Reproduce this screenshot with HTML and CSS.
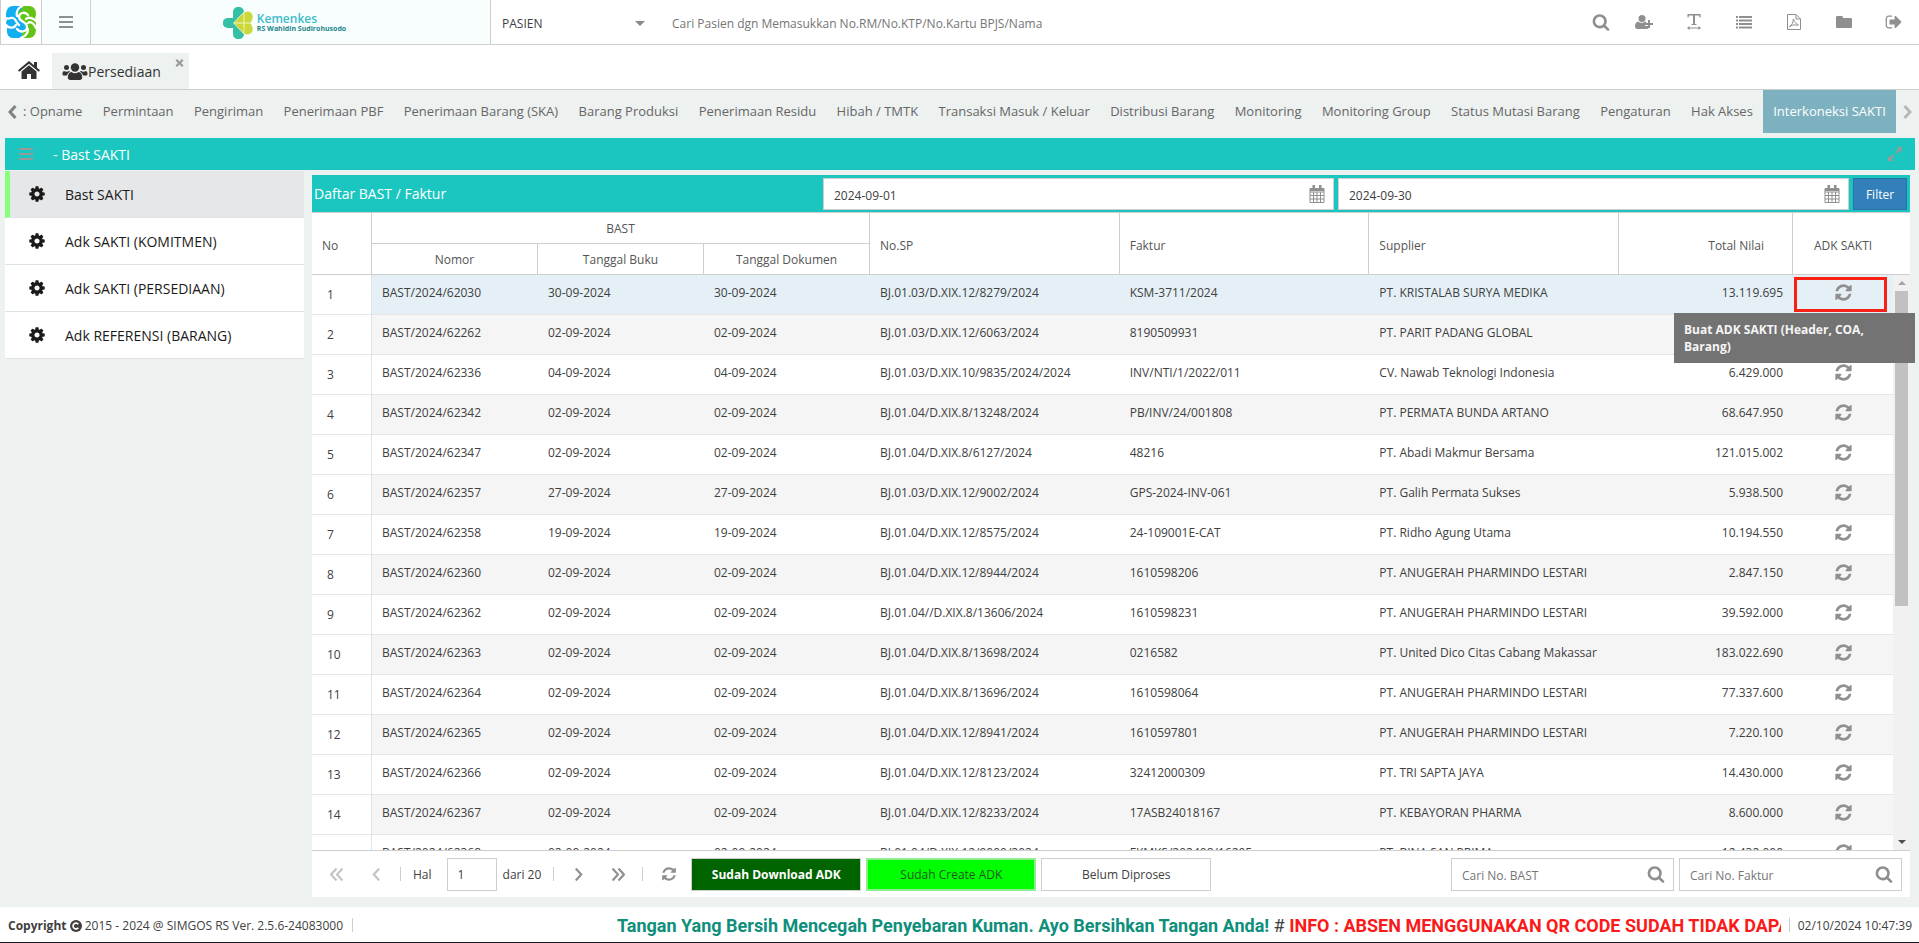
FILE: index.html
```html
<!DOCTYPE html>
<html lang="id">
<head>
  <meta charset="UTF-8">
  <title>SIMGOS - Persediaan</title>
  <link rel="stylesheet" href="styles.css">
</head>
<body>

  <!-- Icons -->
  <svg class="sprite" aria-hidden="true">
    <symbol id="i-search" viewBox="0 0 1792 1792"><path d="M1216 832q0-185-131.500-316.500t-316.500-131.500-316.500 131.500-131.500 316.500 131.500 316.500 316.500 131.500 316.500-131.500 131.500-316.500zm512 832q0 52-38 90t-90 38q-54 0-90-38l-343-342q-179 124-399 124-143 0-273.500-55.500t-225-150-150-225-55.500-273.500 55.500-273.500 150-225 225-150 273.500-55.500 273.500 55.500 225 150 150 225 55.500 273.500q0 220-124 399l343 343q37 37 37 90z"/></symbol>
    <symbol id="i-refresh" viewBox="0 0 1792 1792"><path d="M1639 1056q0 5-1 7-64 268-268 434.500t-478 166.500q-146 0-282.500-55t-243.500-157l-129 129q-19 19-45 19t-45-19-19-45v-448q0-26 19-45t45-19h448q26 0 45 19t19 45-19 45l-137 137q71 66 161 102t187 36q134 0 250-65t186-179q11-17 53-117 8-23 30-23h192q13 0 22.500 9.500t9.500 22.500zm25-800v448q0 26-19 45t-45 19h-448q-26 0-45-19t-19-45 19-45l138-138q-148-137-349-137-134 0-250 65t-186 179q-11 17-53 117-8 23-30 23h-199q-13 0-22.500-9.500t-9.500-22.500v-7q65-268 270-434.500t480-166.500q146 0 284 55.500t245 156.500l130-129q19-19 45-19t45 19 19 45z"/></symbol>
    <symbol id="i-cog" viewBox="0 0 1792 1792"><path d="M1152 896q0-106-75-181t-181-75-181 75-75 181 75 181 181 75 181-75 75-181zm512-109v222q0 12-8 23t-20 13l-185 28q-19 54-39 91 35 50 107 138 10 12 10 25t-9 23q-27 37-99 108t-94 71q-12 0-26-9l-138-108q-44 23-91 38-16 136-29 186-7 28-36 28h-222q-14 0-24.500-8.500t-11.500-21.500l-28-184q-49-16-90-37l-141 107q-10 9-25 9-14 0-25-11-126-114-165-168-7-10-7-23 0-12 8-23 15-21 51-66.500t54-70.500q-27-50-41-99l-183-27q-13-2-21-12.500t-8-23.500v-222q0-12 8-23t19-13l186-28q14-46 39-92-40-57-107-138-10-12-10-24 0-10 9-23 26-36 98.500-107.500t94.500-71.500q13 0 26 10l138 107q44-23 91-38 16-136 29-186 7-28 36-28h222q14 0 24.500 8.500t11.500 21.500l28 184q49 16 90 37l142-107q9-9 24-9 13 0 25 10 129 119 165 170 7 8 7 22 0 12-8 23-15 21-51 66.500t-54 70.500q26 50 41 98l183 28q13 2 21 12.500t8 23.500z"/></symbol>
    <symbol id="i-signout" viewBox="0 0 1792 1792"><path d="M704 1440q0 4 1 20t.5 26.500-3 23.500-10 19.500-20.500 6.500h-320q-119 0-203.500-84.500t-84.500-203.500v-704q0-119 84.500-203.500t203.500-84.500h320q13 0 22.500 9.500t9.500 22.500q0 4 1 20t.5 26.500-3 23.500-10 19.500-20.500 6.500h-320q-66 0-113 47t-47 113v704q0 66 47 113t113 47h312l11.500 1 11.500 3 8 5.500 7 9 2 13.500zm928-544q0 26-19 45l-544 544q-19 19-45 19t-45-19-19-45v-288h-448q-26 0-45-19t-19-45v-384q0-26 19-45t45-19h448v-288q0-26 19-45t45-19 45 19l544 544q19 19 19 45z"/></symbol>
    <symbol id="i-bars" viewBox="0 0 14 14"><path d="M0 1h14v2H0zM0 6h14v2H0zM0 11h14v2H0z"/></symbol>
    <symbol id="i-userplus" viewBox="0 0 18 14"><circle cx="7" cy="3.500" r="3.500"/><path d="M3 6.500C1 7 0 9 0 11.500 0 13 1 14 2.500 14h9c1 0 1.500-.3 2-.8V11H10V8h1.500c-.2-.8-.6-1.300-1.200-1.500C8.500 8.300 5 8.300 3 6.500z"/><path d="M13 5h2v3h3v2h-3v3h-2v-3h-3V8h3z"/></symbol>
    <symbol id="i-text" viewBox="0 0 14 16"><path d="M.5 0h13v3.500h-1L12 1.500H8V10h1.500v1h-5v-1H6V1.500H2l-.5 2h-1zM0 14l2.500-2v1.500h9V12l2.500 2-2.500 2v-1.500h-9V16z"/></symbol>
    <symbol id="i-list" viewBox="0 0 16 14"><path d="M0 1h2v2H0zM0 4.500h2v2H0zM0 8h2v2H0zM0 11.500h2v2H0zM3 1h13v2H3zM3 4.500h13v2H3zM3 8h13v2H3zM3 11.500h13v2H3z"/></symbol>
    <symbol id="i-pdf" viewBox="0 0 14 16"><path d="M.5.500h8.500l4.500 4.500v10.500H.5zM9 .5V5h4.500M6.500 5c1 2.500 1 4 4.500 5.500 1 .6-.5 1-1.500.7-2-.7-4-.2-5.500.6-1.200 1.300-2 1.500-1.200.5C5 11 6.500 8 6.200 5z" fill="none" stroke="currentColor"/></symbol>
    <symbol id="i-folder" viewBox="0 0 16 12"><path d="M1.500 0h4C6.500 0 7 .7 7 1.500V2h7.500c1 0 1.500.6 1.500 1.500v7c0 1-.5 1.500-1.500 1.500h-13C.5 12 0 11.500 0 10.500v-9C0 .6.500 0 1.500 0z"/></symbol>
    <symbol id="i-home" viewBox="0 0 22 18"><path d="M11 0L0 9.300l1.300 1.500L11 2.700l9.700 8.100L22 9.300l-3-2.500V1h-3v3.200z"/><path d="M11 4.200L3.500 10.500V18H9v-5h4v5h5.500v-7.500z"/></symbol>
    <symbol id="i-users" viewBox="0 0 25 17"><circle cx="12.500" cy="4.500" r="4.200"/><circle cx="4" cy="4.500" r="2.500"/><circle cx="21" cy="4.500" r="2.500"/><path d="M9 9c-2.500.2-3.700 2.500-3.700 5.500 0 1.500 1 2.500 2.500 2.500h9.400c1.500 0 2.500-1 2.500-2.500 0-3-1.200-5.300-3.700-5.500-2 1.600-5 1.600-7 0zM1.500 8C.4 8.300 0 9.500 0 11c0 1 .6 1.500 1.500 1.500h3C5 11 6 9.500 7.300 8.800 7.500 8.500 7 8 6.500 8c-1.500 1-3.500 1-5 0zM23.500 8c1.100.3 1.500 1.500 1.500 3 0 1-.6 1.500-1.500 1.500h-3c-.5-1.500-1.500-3-2.800-3.700-.2-.3.300-.8.800-.8 1.500 1 3.500 1 5 0z"/></symbol>
    <symbol id="i-close" viewBox="0 0 8 8"><path d="M1.500 0L4 2.400 6.500 0 8 1.500 5.600 4 8 6.500 6.500 8 4 5.600 1.500 8 0 6.500 2.400 4 0 1.500z"/></symbol>
    <symbol id="i-left" viewBox="0 0 9 14"><path d="M7.500 1L2 7l5.500 6" fill="none" stroke="currentColor" stroke-width="3"/></symbol>
    <symbol id="i-right" viewBox="0 0 9 14"><path d="M1.500 1L7 7l-5.500 6" fill="none" stroke="currentColor" stroke-width="3"/></symbol>
    <symbol id="i-expand" viewBox="0 0 14 14"><path d="M8.500 0H14v5.500l-2-2-3.300 3.300-1.500-1.500L10.500 2zM5.500 14H0V8.500l2 2 3.300-3.300 1.500 1.500L3.500 12z"/></symbol>
    <symbol id="i-calendar" viewBox="0 0 16 18"><path d="M1 3.500h14v14H1zM1 7h14M1 10.500h14M1 14h14M4.500 7v10.500M8 7v10.500M11.500 7v10.500" fill="none" stroke="currentColor"/><path d="M1 3h14v3H1zM3.500 0h2.500v5H3.500zM10 0h2.500v5H10z"/></symbol>
    <symbol id="i-first" viewBox="0 0 12 12"><path d="M6 .5L1 6l5 5.500M11.500.500L6.500 6l5 5.500" fill="none" stroke="currentColor" stroke-width="2"/></symbol>
    <symbol id="i-prev" viewBox="0 0 12 12"><path d="M8.500.500L3.500 6l5 5.500" fill="none" stroke="currentColor" stroke-width="2"/></symbol>
    <symbol id="i-next" viewBox="0 0 12 12"><path d="M3.500.500L8.500 6l-5 5.500" fill="none" stroke="currentColor" stroke-width="2"/></symbol>
    <symbol id="i-last" viewBox="0 0 12 12"><path d="M.5.500L5.500 6l-5 5.500M6 .5L11 6l-5 5.500" fill="none" stroke="currentColor" stroke-width="2"/></symbol>
    <symbol id="i-copyright" viewBox="0 0 12 12"><circle cx="6" cy="6" r="6"/><path d="M8.300 4.300a2.900 2.900 0 1 0 0 3.400" fill="none" stroke="#fff" stroke-width="1.600"/></symbol>
  </svg>

  <header class="topbar">
    <a class="app-logo" href="#" aria-label="SIMGOS">
      <svg viewBox="0 0 30 32">
        <path fill="#12aef0" d="M7 0h5c2 0 3 .5 4 2v28c-1 1.500-2 2-4 2H7c-4 0-6-3-6-7 0-2 0-3 1-4-1-1-2-2-2-4 0-1 .5-2 1-3-.7-1-1-2-1-4 0-6 2-10 7-10z"/>
        <path fill="#62c414" d="M19 0h4c5 0 7 4 7 8 0 2-.5 3-1 4 .7 1 1 2 1 3v8c0 6-3 9-7 9h-4c-2 0-3-.5-3-2V2c0-1.500 1-2 3-2z"/>
        <path fill="#12aef0" d="M15 15l5 4c1 3-1 6-5 7z"/>
        <path fill="#62c414" d="M16 3c-4 2-5 6-3 9l3 2z"/>
        <path fill="none" stroke="#fff" stroke-width="2.300" stroke-linecap="round" d="M22 9c-3-4-9-2-9 2 0 5 8 4 8 10 0 5-7 6-10 2M16 0c-4 2-6 6-5 10M0 12c3 2 4-1 7 0 3 .7 3 5 6 7M0 19c2 3 8 4 10 0M20 13c3-3 8 0 10 2M22 17c2-2 6 0 8 5M15 32c5-2 7-5 7-9"/>
      </svg>
    </a>
    <button class="menu-btn" aria-label="Menu"><svg class="icon-14"><use href="#i-bars"/></svg></button>
    <div class="brand">
      <svg class="brand-mark" viewBox="0 0 30 32">
        <path fill="#35bfa5" d="M10 5c0-7 11-7 11 0v11h-6l-5-5zM10 11H5c-7 0-7 10 0 10h5l5-5zM10 27c0 7 11 7 11 0V16h-6l-5 5z"/>
        <path fill="#cbd83a" stroke="#f8fdfd" stroke-width=".7" d="M10.500 16L20 6c3.500-3.500 10-1.500 10 3.500 0 3-1 4.500-2.500 6.500 1.500 2 2.500 3.500 2.500 6.500 0 5-6.500 7-10 3.500z"/>
        <path fill="none" stroke="#f5fbe0" stroke-width=".8" d="M11 16h16.500M21 5.500v21"/>
      </svg>
      <div class="brand-text">
        <strong>Kemenkes</strong>
        <span>RS Wahidin Sudirohusodo</span>
      </div>
    </div>
    <div class="search-type">
      <select aria-label="Jenis pencarian">
        <option>PASIEN</option>
      </select>
    </div>
    <input class="search-patient" type="text" aria-label="Cari Pasien" placeholder="Cari Pasien dgn Memasukkan No.RM/No.KTP/No.Kartu BPJS/Nama">
    <div class="top-tools">
      <button aria-label="Cari"><svg class="icon-18"><use href="#i-search"/></svg></button>
      <button aria-label="Pasien baru"><svg class="icon-18"><use href="#i-userplus"/></svg></button>
      <button aria-label="Teks"><svg class="icon-16"><use href="#i-text"/></svg></button>
      <button aria-label="Daftar"><svg class="icon-16"><use href="#i-list"/></svg></button>
      <button aria-label="PDF"><svg class="icon-16"><use href="#i-pdf"/></svg></button>
      <button aria-label="Berkas"><svg class="icon-16"><use href="#i-folder"/></svg></button>
      <button aria-label="Keluar"><svg class="icon-18"><use href="#i-signout"/></svg></button>
    </div>
  </header>

  <div class="tabs">
    <a class="home" href="#" aria-label="Beranda"><svg><use href="#i-home"/></svg></a>
    <div class="tab">
      <svg class="tab-icon"><use href="#i-users"/></svg>
      <span>Persediaan</span>
      <button aria-label="Tutup"><svg><use href="#i-close"/></svg></button>
    </div>
  </div>

  <nav class="modules">
    <button class="scroll-btn" aria-label="Sebelumnya"><svg><use href="#i-left"/></svg></button>
    <div class="module-list">
      <a href="#">: Opname</a>
      <a href="#">Permintaan</a>
      <a href="#">Pengiriman</a>
      <a href="#">Penerimaan PBF</a>
      <a href="#">Penerimaan Barang (SKA)</a>
      <a href="#">Barang Produksi</a>
      <a href="#">Penerimaan Residu</a>
      <a href="#">Hibah / TMTK</a>
      <a href="#">Transaksi Masuk / Keluar</a>
      <a href="#">Distribusi Barang</a>
      <a href="#">Monitoring</a>
      <a href="#">Monitoring Group</a>
      <a href="#">Status Mutasi Barang</a>
      <a href="#">Pengaturan</a>
      <a href="#">Hak Akses</a>
      <a href="#" class="active">Interkoneksi SAKTI</a>
    </div>
    <button class="scroll-btn next" aria-label="Berikutnya"><svg><use href="#i-right"/></svg></button>
  </nav>

  <main class="workspace">
    <div class="panel-title">
      <button aria-label="Menu panel"><svg class="icon-14"><use href="#i-bars"/></svg></button>
      <h1>- Bast SAKTI</h1>
      <button class="expand" aria-label="Perbesar"><svg class="icon-14"><use href="#i-expand"/></svg></button>
    </div>

    <div class="columns">
      <aside class="side-menu">
        <a href="#" class="active"><svg class="icon-18"><use href="#i-cog"/></svg>Bast SAKTI</a>
        <a href="#"><svg class="icon-18"><use href="#i-cog"/></svg>Adk SAKTI (KOMITMEN)</a>
        <a href="#"><svg class="icon-18"><use href="#i-cog"/></svg>Adk SAKTI (PERSEDIAAN)</a>
        <a href="#"><svg class="icon-18"><use href="#i-cog"/></svg>Adk REFERENSI (BARANG)</a>
      </aside>

      <section class="grid-panel">
        <div class="filter-bar">
          <h2>Daftar BAST / Faktur</h2>
          <div class="field">
            <input type="text" aria-label="Tanggal awal" value="2024-09-01">
            <svg class="icon-cal"><use href="#i-calendar"/></svg>
          </div>
          <div class="field">
            <input type="text" aria-label="Tanggal akhir" value="2024-09-30">
            <svg class="icon-cal"><use href="#i-calendar"/></svg>
          </div>
          <button class="filter-btn">Filter</button>
        </div>

        <div class="grid-view">
          <div class="grid-scroll">
            <table>
              <colgroup>
                <col class="c-no"><col class="c-bast"><col class="c-bast"><col class="c-bast">
                <col><col><col><col class="c-total"><col class="c-adk">
              </colgroup>
              <thead>
                <tr>
                  <th rowspan="2">No</th>
                  <th colspan="3" class="center">BAST</th>
                  <th rowspan="2">No.SP</th>
                  <th rowspan="2">Faktur</th>
                  <th rowspan="2">Supplier</th>
                  <th rowspan="2" class="total">Total Nilai</th>
                  <th rowspan="2" class="center last">ADK SAKTI</th>
                </tr>
                <tr>
                  <th class="center">Nomor</th>
                  <th class="center">Tanggal Buku</th>
                  <th class="center">Tanggal Dokumen</th>
                </tr>
              </thead>
              <tbody>
                <tr class="selected"><td>1</td><td>BAST/2024/62030</td><td>30-09-2024</td><td>30-09-2024</td><td>BJ.01.03/D.XIX.12/8279/2024</td><td>KSM-3711/2024</td><td>PT. KRISTALAB SURYA MEDIKA</td><td>13.119.695</td><td><button aria-label="Buat ADK SAKTI"><svg><use href="#i-refresh"/></svg></button></td></tr>
                <tr><td>2</td><td>BAST/2024/62262</td><td>02-09-2024</td><td>02-09-2024</td><td>BJ.01.03/D.XIX.12/6063/2024</td><td>8190509931</td><td>PT. PARIT PADANG GLOBAL</td><td></td><td><button aria-label="Buat ADK SAKTI"><svg><use href="#i-refresh"/></svg></button></td></tr>
                <tr><td>3</td><td>BAST/2024/62336</td><td>04-09-2024</td><td>04-09-2024</td><td>BJ.01.03/D.XIX.10/9835/2024/2024</td><td>INV/NTI/1/2022/011</td><td>CV. Nawab Teknologi Indonesia</td><td>6.429.000</td><td><button aria-label="Buat ADK SAKTI"><svg><use href="#i-refresh"/></svg></button></td></tr>
                <tr><td>4</td><td>BAST/2024/62342</td><td>02-09-2024</td><td>02-09-2024</td><td>BJ.01.04/D.XIX.8/13248/2024</td><td>PB/INV/24/001808</td><td>PT. PERMATA BUNDA ARTANO</td><td>68.647.950</td><td><button aria-label="Buat ADK SAKTI"><svg><use href="#i-refresh"/></svg></button></td></tr>
                <tr><td>5</td><td>BAST/2024/62347</td><td>02-09-2024</td><td>02-09-2024</td><td>BJ.01.04/D.XIX.8/6127/2024</td><td>48216</td><td>PT. Abadi Makmur Bersama</td><td>121.015.002</td><td><button aria-label="Buat ADK SAKTI"><svg><use href="#i-refresh"/></svg></button></td></tr>
                <tr><td>6</td><td>BAST/2024/62357</td><td>27-09-2024</td><td>27-09-2024</td><td>BJ.01.03/D.XIX.12/9002/2024</td><td>GPS-2024-INV-061</td><td>PT. Galih Permata Sukses</td><td>5.938.500</td><td><button aria-label="Buat ADK SAKTI"><svg><use href="#i-refresh"/></svg></button></td></tr>
                <tr><td>7</td><td>BAST/2024/62358</td><td>19-09-2024</td><td>19-09-2024</td><td>BJ.01.04/D.XIX.12/8575/2024</td><td>24-109001E-CAT</td><td>PT. Ridho Agung Utama</td><td>10.194.550</td><td><button aria-label="Buat ADK SAKTI"><svg><use href="#i-refresh"/></svg></button></td></tr>
                <tr><td>8</td><td>BAST/2024/62360</td><td>02-09-2024</td><td>02-09-2024</td><td>BJ.01.04/D.XIX.12/8944/2024</td><td>1610598206</td><td>PT. ANUGERAH PHARMINDO LESTARI</td><td>2.847.150</td><td><button aria-label="Buat ADK SAKTI"><svg><use href="#i-refresh"/></svg></button></td></tr>
                <tr><td>9</td><td>BAST/2024/62362</td><td>02-09-2024</td><td>02-09-2024</td><td>BJ.01.04//D.XIX.8/13606/2024</td><td>1610598231</td><td>PT. ANUGERAH PHARMINDO LESTARI</td><td>39.592.000</td><td><button aria-label="Buat ADK SAKTI"><svg><use href="#i-refresh"/></svg></button></td></tr>
                <tr><td>10</td><td>BAST/2024/62363</td><td>02-09-2024</td><td>02-09-2024</td><td>BJ.01.04/D.XIX.8/13698/2024</td><td>0216582</td><td>PT. United Dico Citas Cabang Makassar</td><td>183.022.690</td><td><button aria-label="Buat ADK SAKTI"><svg><use href="#i-refresh"/></svg></button></td></tr>
                <tr><td>11</td><td>BAST/2024/62364</td><td>02-09-2024</td><td>02-09-2024</td><td>BJ.01.04/D.XIX.8/13696/2024</td><td>1610598064</td><td>PT. ANUGERAH PHARMINDO LESTARI</td><td>77.337.600</td><td><button aria-label="Buat ADK SAKTI"><svg><use href="#i-refresh"/></svg></button></td></tr>
                <tr><td>12</td><td>BAST/2024/62365</td><td>02-09-2024</td><td>02-09-2024</td><td>BJ.01.04/D.XIX.12/8941/2024</td><td>1610597801</td><td>PT. ANUGERAH PHARMINDO LESTARI</td><td>7.220.100</td><td><button aria-label="Buat ADK SAKTI"><svg><use href="#i-refresh"/></svg></button></td></tr>
                <tr><td>13</td><td>BAST/2024/62366</td><td>02-09-2024</td><td>02-09-2024</td><td>BJ.01.04/D.XIX.12/8123/2024</td><td>32412000309</td><td>PT. TRI SAPTA JAYA</td><td>14.430.000</td><td><button aria-label="Buat ADK SAKTI"><svg><use href="#i-refresh"/></svg></button></td></tr>
                <tr><td>14</td><td>BAST/2024/62367</td><td>02-09-2024</td><td>02-09-2024</td><td>BJ.01.04/D.XIX.12/8233/2024</td><td>17ASB24018167</td><td>PT. KEBAYORAN PHARMA</td><td>8.600.000</td><td><button aria-label="Buat ADK SAKTI"><svg><use href="#i-refresh"/></svg></button></td></tr>
                <tr><td>15</td><td>BAST/2024/62368</td><td>02-09-2024</td><td>02-09-2024</td><td>BJ.01.04/D.XIX.12/9009/2024</td><td>FKMKS/202408/16205</td><td>PT. BINA SAN PRIMA</td><td>12.432.000</td><td><button aria-label="Buat ADK SAKTI"><svg><use href="#i-refresh"/></svg></button></td></tr>
              </tbody>
            </table>
          </div>
          <div class="scroll-col">
            <div class="scroll-head"></div>
            <div class="scrollbar">
              <span class="arrow up"></span>
              <div class="track"><div class="thumb"></div></div>
              <span class="arrow down"></span>
            </div>
          </div>
        </div>

        <div class="pager">
          <button class="page-btn" disabled aria-label="Halaman pertama"><svg><use href="#i-first"/></svg></button>
          <button class="page-btn" disabled aria-label="Halaman sebelumnya"><svg><use href="#i-prev"/></svg></button>
          <span class="sep"></span>
          <label for="page">Hal</label>
          <input id="page" class="page-input" type="text" value="1">
          <span class="page-total">dari 20</span>
          <span class="sep"></span>
          <button class="page-btn" aria-label="Halaman berikutnya"><svg><use href="#i-next"/></svg></button>
          <button class="page-btn" aria-label="Halaman terakhir"><svg><use href="#i-last"/></svg></button>
          <span class="sep"></span>
          <button class="page-btn reload" aria-label="Muat ulang"><svg><use href="#i-refresh"/></svg></button>
          <button class="status downloaded">Sudah Download ADK</button>
          <button class="status created">Sudah Create ADK</button>
          <button class="status">Belum Diproses</button>
          <div class="field find first-find">
            <input type="text" aria-label="Cari No. BAST" placeholder="Cari No. BAST">
            <svg class="icon-18"><use href="#i-search"/></svg>
          </div>
          <div class="field find">
            <input type="text" aria-label="Cari No. Faktur" placeholder="Cari No. Faktur">
            <svg class="icon-18"><use href="#i-search"/></svg>
          </div>
        </div>
      </section>
    </div>

    <div class="highlight"></div>
    <div class="tooltip" role="tooltip">Buat ADK SAKTI (Header, COA, Barang)</div>
  </main>

  <footer class="footer">
    <div class="copyright"><b>Copyright</b> <svg><use href="#i-copyright"/></svg> 2015 - 2024 @ SIMGOS RS Ver. 2.5.6-24083000</div>
    <span class="sep"></span>
    <div class="ticker"><b class="green">Tangan Yang Bersih Mencegah Penyebaran Kuman. Ayo Bersihkan Tangan Anda!</b> # <b class="red">INFO : ABSEN MENGGUNAKAN QR CODE SUDAH TIDAK DAPAT</b></div>
    <span class="sep"></span>
    <time>02/10/2024 10:47:39</time>
  </footer>

</body>
</html>
```
FILE: styles.css
```css
* {
  box-sizing: border-box;
}

body {
  margin: 0;
  height: 100vh;
  display: flex;
  flex-direction: column;
  overflow: hidden;
  background-color: #edf1f0;
  color: #404040;
  font-family: "Open Sans", "Noto Sans", sans-serif;
  font-size: 12px;
}

button, input, select {
  font: inherit;
  color: inherit;
}

button {
  padding: 0;
  border: none;
  background: none;
  cursor: pointer;
}

a {
  color: inherit;
  text-decoration: none;
}

svg {
  display: block;
  fill: currentColor;
}

.sprite {
  display: none;
}

.icon-14 {
  width: 14px;
  height: 14px;
}

.icon-16 {
  width: 16px;
  height: 16px;
}

.icon-18 {
  width: 18px;
  height: 18px;
}

.icon-cal {
  width: 16px;
  height: 18px;
}

/* Top bar */
.topbar {
  display: flex;
  height: 45px;
  flex: none;
  background-color: #fff;
  border-bottom: 1px solid #cecece;
  border-left: 1px solid #cecece;
}

.app-logo {
  width: 41px;
  padding: 6px 5px;
  border-right: 1px solid #cecece;
}

.app-logo svg {
  width: 30px;
  height: 32px;
}

.menu-btn {
  width: 49px;
  padding: 0 17px;
  background-color: #f8fdfd;
  border-right: 1px solid #cecece;
  color: #8f8f8f;
}

.brand {
  width: 400px;
  display: flex;
  align-items: center;
  justify-content: center;
  gap: 4px;
  padding: 2px 12px 0 0;
  background-color: #f8fdfd;
  border-right: 1px solid #cecece;
}

.brand-mark {
  width: 30px;
  height: 32px;
}

.brand-text strong {
  display: block;
  color: #3cbccb;
  font-size: 12px;
  font-weight: 600;
  line-height: 12px;
}

.brand-text span {
  display: block;
  color: #24858a;
  font-size: 7px;
  font-weight: bold;
  line-height: 8px;
}

.search-type {
  width: 170px;
  display: flex;
  align-items: center;
  padding: 2px 16px 0 11px;
}

.search-type::after {
  content: "";
  border: 5px solid transparent;
  border-top-color: #8a8a8a;
  border-bottom: none;
}

.search-type select {
  flex: 1;
  padding: 0;
  border: none;
  background: none;
  appearance: none;
}

.search-patient {
  flex: 1;
  padding: 3px 11px 0;
  border: none;
  background: none;
}

input::placeholder {
  color: #757575;
  opacity: 1;
}

.top-tools {
  display: flex;
  color: #8f8f8f;
}

.top-tools button {
  width: 50px;
  display: flex;
  align-items: center;
  justify-content: center;
}

.top-tools button:first-child {
  width: 36px;
}

/* Open tabs */
.tabs {
  display: flex;
  align-items: flex-end;
  flex: none;
  height: 45px;
  background-color: #fff;
  border-bottom: 1px solid #cecece;
  color: #333;
}

.home {
  width: 52px;
  padding: 0 0 10px 18px;
}

.home svg {
  width: 22px;
  height: 18px;
}

.tab {
  display: flex;
  align-items: center;
  width: 137px;
  height: 36px;
  padding: 0 5px 0 10px;
  background-color: #edf1f0;
  font-size: 14px;
}

.tab-icon {
  width: 26px;
  height: 17px;
}

.tab button {
  align-self: flex-start;
  margin: 6px 0 0 auto;
  color: #999;
}

.tab button svg {
  width: 9px;
  height: 8px;
}

/* Module navigation */
.modules {
  display: flex;
  flex: none;
  height: 48px;
  padding-bottom: 5px;
  color: #666;
  font-size: 13px;
}

.module-list {
  flex: 1;
  display: flex;
  justify-content: space-between;
  overflow: hidden;
}

.module-list a {
  padding: 0 10px;
  line-height: 43px;
  white-space: nowrap;
}

.module-list a:first-child {
  padding-left: 0;
}

.module-list a.active {
  background-color: #7db1c0;
  color: #fff;
}

.scroll-btn {
  width: 23px;
  padding-left: 8px;
  color: #808080;
}

.scroll-btn.next {
  padding-left: 7px;
  color: #b5b8b8;
}

.scroll-btn svg {
  width: 9px;
  height: 14px;
}

/* Workspace */
.workspace {
  position: relative;
  flex: 1;
  min-height: 0;
  display: flex;
  flex-direction: column;
  margin: 0 4px 10px 5px;
}

.panel-title {
  display: flex;
  align-items: center;
  flex: none;
  height: 32px;
  padding: 0 13px 0 14px;
  background-color: #1cc6c0;
  color: #999;
}

.panel-title h1 {
  margin: 0 0 0 20px;
  color: #fff;
  font-size: 14px;
  font-weight: 500;
}

.expand {
  margin-left: auto;
}

.columns {
  flex: 1;
  min-height: 0;
  display: flex;
  gap: 8px;
}

.side-menu {
  width: 299px;
  padding-top: 1px;
  align-self: flex-start;
  color: #1a1a1a;
  font-size: 14px;
}

.side-menu a {
  display: flex;
  align-items: center;
  gap: 19px;
  height: 47px;
  padding-left: 23px;
  background-color: #fff;
  border-bottom: 1px solid #e0e3e6;
}

.side-menu a.active {
  padding-left: 18px;
  border-left: 5px solid #86ff7c;
  background-color: #e6e7e8;
}

.grid-panel {
  flex: 1;
  min-width: 0;
  display: flex;
  flex-direction: column;
  margin: 5px 5px 0 0;
  background-color: #fff;
}

.filter-bar {
  display: flex;
  gap: 4px;
  flex: none;
  height: 38px;
  padding: 3px 3px 2px 2px;
  background-color: #1cc6c0;
  border-bottom: 1px solid #cecece;
}

.filter-bar h2 {
  flex: 1;
  margin: 0;
  padding-right: 4px;
  color: #fff;
  font-size: 14px;
  font-weight: 500;
  line-height: 31px;
}

.field {
  flex: 1;
  display: flex;
  align-items: center;
  padding-right: 8px;
  background-color: #fff;
  border: 1px solid #cecece;
  color: #8f8f8f;
}

.field input {
  flex: 1;
  min-width: 0;
  height: 30px;
  padding: 2px 10px 0;
  border: none;
  background: none;
  color: #404040;
}

.filter-btn {
  width: 54px;
  background-color: #337fb9;
  border: 1px solid #2a70a8;
  color: #fff;
}

/* Grid */
.grid-view {
  flex: 1;
  min-height: 0;
  display: flex;
}

.grid-scroll {
  flex: 1;
  overflow: hidden;
}

table {
  width: 100%;
  table-layout: fixed;
  border-collapse: separate;
  border-spacing: 0;
}

.c-no {
  width: 60px;
}

.c-bast {
  width: 166px;
}

.c-total {
  width: 174px;
}

.c-adk {
  width: 100px;
}

th {
  height: 31px;
  padding: 0 10px;
  border-right: 1px solid #cecece;
  border-bottom: 1px solid #cecece;
  color: #555;
  font-weight: normal;
  text-align: left;
}

th[rowspan] {
  padding-top: 3px;
}

th.center {
  text-align: center;
}

th.total {
  padding-right: 28px;
  text-align: right;
}

th.last {
  border-right: none;
}

td {
  height: 40px;
  padding: 9px 10px 0;
  border-bottom: 1px solid #e6e6e6;
  line-height: 17px;
  vertical-align: top;
  white-space: nowrap;
}

td:first-child {
  padding: 11px 10px 0 15px;
  background-color: #fff;
  border-right: 1px solid #e0e3e6;
}

td:nth-child(8) {
  text-align: right;
}

td:last-child {
  padding-top: 8px;
  color: #8f8f8f;
}

td button {
  display: block;
  margin: 0 auto;
}

td svg {
  width: 19px;
  height: 19px;
}

tbody tr:nth-child(even) {
  background-color: #f5f5f5;
}

tbody tr.selected {
  background-color: #e5f0f6;
}

.scroll-col {
  width: 17px;
  display: flex;
  flex-direction: column;
}

.scroll-head {
  height: 62px;
  border-bottom: 1px solid #cecece;
}

.scrollbar {
  flex: 1;
  display: flex;
  flex-direction: column;
  align-items: center;
  background-color: #f1f1f1;
}

.track {
  flex: 1;
  width: 13px;
}

.thumb {
  height: 58%;
  background-color: #c1c1c1;
}

.arrow {
  margin: 6px 0;
  border: 4px solid transparent;
}

.arrow.up {
  border-top: none;
  border-bottom-color: #a3a3a3;
}

.arrow.down {
  border-bottom: none;
  border-top-color: #505050;
}

/* Paging toolbar */
.pager {
  display: flex;
  align-items: center;
  flex: none;
  height: 47px;
  padding: 0 8px 0 4px;
  border-top: 1px solid #cecece;
}

.sep {
  width: 1px;
  height: 14px;
  background-color: #cecece;
}

.pager .sep {
  margin: 0 4px;
}

.page-btn {
  width: 40px;
  height: 32px;
  color: #8f8f8f;
}

.page-btn:disabled {
  color: #c4c4c4;
}

.page-btn svg {
  width: 13px;
  height: 13px;
  margin: 0 auto;
}

.page-btn.reload {
  width: 44px;
}

.page-btn.reload svg {
  width: 16px;
  height: 16px;
}

.pager label {
  margin: 0 15px 0 8px;
}

.page-input {
  width: 50px;
  height: 33px;
  padding: 0 10px;
  border: 1px solid #cecece;
}

.page-total {
  margin: 0 8px 0 6px;
}

.status {
  width: 170px;
  height: 33px;
  margin-right: 5px;
  border: 1px solid #cecece;
  background-color: #fff;
}

.status.downloaded {
  background-color: #006400;
  color: #fff;
  font-weight: bold;
}

.status.created {
  background-color: #0f0;
  border: 2px solid #90ee90;
  color: #1e5a1e;
}

.find {
  flex: none;
  width: 223px;
  margin-left: 5px;
  height: 33px;
}

.first-find {
  margin-left: auto;
}

/* Highlighted action and its tooltip */
.highlight {
  position: absolute;
  top: 139px;
  right: 28px;
  width: 93px;
  height: 35px;
  border: 3px solid #fb2015;
}

.tooltip {
  position: absolute;
  top: 175px;
  right: 0;
  width: 241px;
  padding: 8px 10px;
  background-color: #737373;
  color: #f5f5f5;
  font-weight: bold;
  line-height: 17px;
}

/* Footer */
.footer {
  display: flex;
  align-items: center;
  flex: none;
  height: 36px;
  padding: 1px 7px 0 8px;
  background-color: #fff;
  border-bottom: 1px solid #1a1522;
}

.copyright {
  margin-right: 9px;
}

.copyright svg {
  display: inline-block;
  width: 12px;
  height: 12px;
  vertical-align: -2px;
}

.ticker {
  flex: 1;
  min-width: 0;
  margin-right: 8px;
  padding-left: 264px;
  overflow: hidden;
  white-space: nowrap;
  font-family: Roboto, sans-serif;
  font-size: 18px;
}

.green {
  color: #0e8f7b;
}

.red {
  color: #fb1a1a;
}

time {
  margin-left: 8px;
}
```
